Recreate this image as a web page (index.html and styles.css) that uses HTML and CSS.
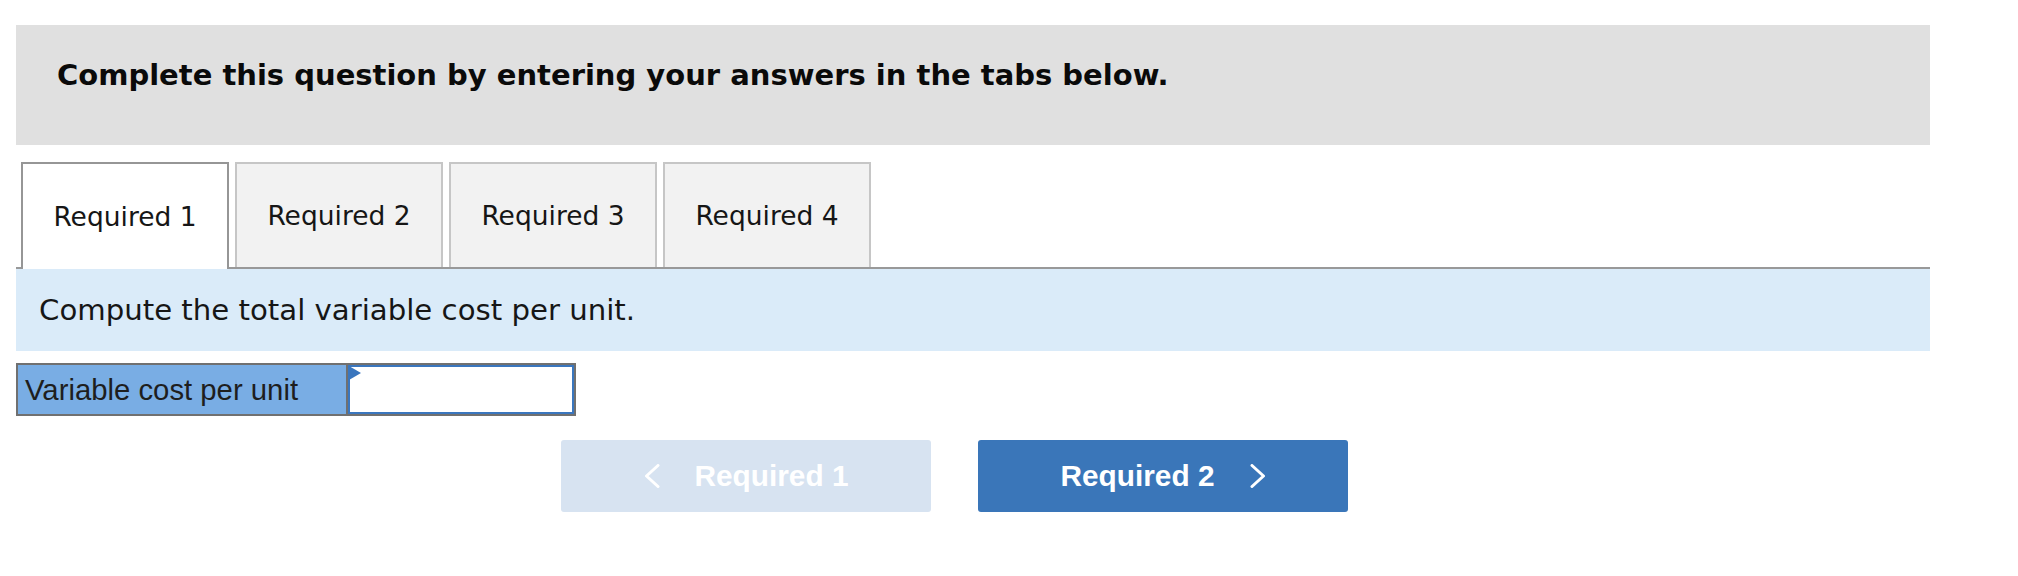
FILE: index.html
```html
<!DOCTYPE html>
<html>
    <head>
        <meta charset="utf-8">
        <link rel="stylesheet" href="styles.css">
        <title>Required 1</title>
    </head>
    <body>
        <div class="question">
            <div class="prompt">Complete this question by entering your answers in the tabs below.</div>

            <div class="tabs">
                <a class="tab active" href="#">Required 1</a>
                <a class="tab" href="#">Required 2</a>
                <a class="tab" href="#">Required 3</a>
                <a class="tab" href="#">Required 4</a>
            </div>

            <div class="instruction">Compute the total variable cost per unit.</div>

            <div class="answer-row">
                <div class="answer-label">Variable cost per unit</div>
                <div class="answer-cell">
                    <span class="flag"></span>
                    <input class="answer-input" type="text" value="">
                </div>
            </div>

            <div class="nav">
                <a class="nav-btn prev" href="#">
                    <svg class="chev" width="16" height="24" viewBox="0 0 16 24"><polyline points="14,1.5 2.5,12 14,22.5" /></svg>
                    <span>Required 1</span>
                </a>
                <a class="nav-btn next" href="#">
                    <span>Required 2</span>
                    <svg class="chev" width="16" height="24" viewBox="0 0 16 24"><polyline points="2,1.5 13.5,12 2,22.5" /></svg>
                </a>
            </div>
        </div>
    </body>
</html>
```

FILE: styles.css
```css
html, body {margin: 0; padding: 0; background: #FFFFFF;}
body {font-family: "DejaVu Sans", Verdana, sans-serif; color: #111;}
a {text-decoration: none; color: inherit;}

.question {margin-left: 16px; width: 1914px; padding-top: 25px;}

.prompt {
    background: #E0E0E0;
    height: 120px;
    box-sizing: border-box;
    padding: 33px 0 0 41px;
    font-weight: bold;
    font-size: 29px;
    color: #0A0A0A;
}

.tabs {
    display: flex;
    gap: 6px;
    padding-left: 5px;
    margin-top: 17px;
    border-bottom: 2px solid #999999;
    height: 105px;
}
.tab {
    width: 208px;
    box-sizing: border-box;
    height: 105px;
    display: flex;
    align-items: center;
    justify-content: center;
    font-size: 26.5px;
    color: #161616;
    background: #F2F2F2;
    border: 2px solid #C6C6C6;
    border-bottom: none;
}
.tab.active {
    background: #FFFFFF;
    border-color: #969696;
    height: 107px;
}

.instruction {
    background: #DAEBF9;
    height: 82px;
    display: flex;
    align-items: center;
    padding-left: 23px;
    font-size: 29.2px;
    color: #161616;
}

.answer-row {
    display: flex;
    width: 560px;
    height: 53px;
    margin-top: 12px;
    border: 2px solid #707070;
    box-sizing: border-box;
}
.answer-label {
    width: 330px;
    background: #79ADE4;
    border-right: 2px solid #707070;
    display: flex;
    align-items: center;
    padding-left: 7px;
    box-sizing: border-box;
    font-family: "Liberation Sans", Arial, sans-serif;
    font-size: 29.3px;
    color: #1E1E1E;
}
.answer-cell {flex: 1; position: relative; display: flex;}
.answer-input {
    flex: 1;
    width: 100%;
    margin: 0;
    border: 2px solid #3A76BE;
    background: #FFFFFF;
    outline: none;
    padding: 0 6px;
    font-size: 24px;
}
.flag {
    position: absolute;
    left: 1px;
    top: 1px;
    width: 0;
    height: 0;
    border-top: 7px solid transparent;
    border-bottom: 7px solid transparent;
    border-left: 12px solid #3A76BE;
}

.nav {
    display: flex;
    gap: 47px;
    margin: 24px 0 0 545px;
}
.nav-btn {
    width: 370px;
    height: 72px;
    border-radius: 3px;
    display: flex;
    align-items: center;
    justify-content: center;
    gap: 35px;
    font-family: "Liberation Sans", Arial, sans-serif;
    font-weight: bold;
    font-size: 29.8px;
    color: #FFFFFF;
}
.nav-btn.prev {background: #D7E3F1;}
.nav-btn.next {background: #3A76B9;}
.chev polyline {fill: none; stroke: #FFFFFF; stroke-width: 3; stroke-linecap: round; stroke-linejoin: round;}
```
